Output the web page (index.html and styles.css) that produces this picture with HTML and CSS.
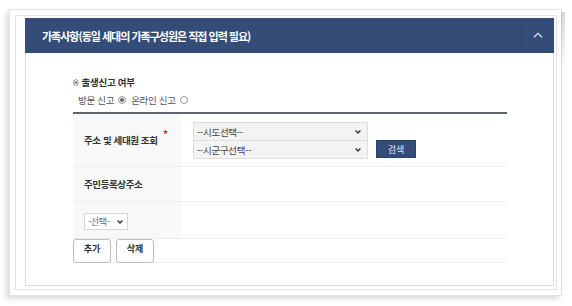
FILE: index.html
```html
<!DOCTYPE html>
<html lang="ko">
<head>
<meta charset="utf-8">
<link rel="stylesheet" href="styles.css">
</head>
<body>
<div class="paper">
  <div class="frame">
    <div class="panel">
      <div class="panel-head">
        <h2 class="title">가족사항(동일 세대의 가족구성원은 직접 입력 필요)</h2>
        <div class="toggle">
          <svg width="10" height="6" viewBox="0 0 10 6"><path d="M1 5.2 L5 1.3 L9 5.2" fill="none" stroke="#dfe5ef" stroke-width="1.3"/></svg>
        </div>
      </div>
      <div class="panel-body">
        <p class="notice"><span class="mark">※</span> 출생신고 여부</p>
        <div class="radios">
          <span>방문 신고</span><span class="radio on"></span>
          <span>온라인 신고</span><span class="radio"></span>
        </div>
        <div class="table">
          <div class="row row-addr">
            <div class="th">주소 및 세대원 조회<span class="req">*</span></div>
            <div class="td addr">
              <div class="selects">
                <div class="select wide"><span>--시도선택--</span><svg class="chev" width="6" height="4" viewBox="0 0 6 4"><path d="M0.6 0.6 L3 3 L5.4 0.6" fill="none" stroke="#333" stroke-width="1.4"/></svg></div>
                <div class="select wide"><span>--시군구선택--</span><svg class="chev" width="6" height="4" viewBox="0 0 6 4"><path d="M0.6 0.6 L3 3 L5.4 0.6" fill="none" stroke="#333" stroke-width="1.4"/></svg></div>
              </div>
              <button class="btn-search">검색</button>
            </div>
          </div>
          <div class="row row-res">
            <div class="th">주민등록상주소</div>
            <div class="td"></div>
          </div>
          <div class="row row-sel">
            <div class="th"><div class="select small"><span>-선택-</span><svg class="chev" width="6" height="4" viewBox="0 0 6 4"><path d="M0.6 0.6 L3 3 L5.4 0.6" fill="none" stroke="#333" stroke-width="1.4"/></svg></div></div>
            <div class="td"></div>
          </div>
          <div class="row row-btns">
            <button class="btn">추가</button>
            <button class="btn">삭제</button>
          </div>
        </div>
      </div>
    </div>
  </div>
</div>
</body>
</html>
```
FILE: styles.css
```css
* { box-sizing: border-box; }
html, body { margin: 0; padding: 0; background: #fff; }
body {
  font-family: "Noto Sans CJK KR", "Noto Sans", sans-serif;
  color: #333;
  width: 572px;
  height: 306px;
  overflow: hidden;
}
.paper {
  position: relative;
  margin: 9px 0 0 9px;
  width: 553px;
  height: 287px;
  border: 1px solid #e2e2e2;
  background: #fff;
  padding: 5px 4px 5px 5px;
  box-shadow: -3px 3px 5px rgba(0,0,0,0.14);
}
.paper::after {
  content: "";
  position: absolute;
  right: -4px;
  top: 2px;
  width: 4px;
  height: 60px;
  background: linear-gradient(to bottom, rgba(0,0,0,0.15), rgba(0,0,0,0));
}
.frame {
  height: 100%;
  border: 1px solid #e2e2e2;
  padding: 2px 2px 3px 9px;
}
.panel {
  height: 100%;
  border: 1px solid #dcdcdc;
  border-top: none;
  display: flex;
  flex-direction: column;
}
.panel-head {
  height: 35px;
  margin: 0 -1px;
  background: #344c78;
  display: flex;
  align-items: center;
  justify-content: space-between;
}
.title {
  margin: 0 0 0 17px;
  color: #fff;
  font-size: 11px;
  font-weight: 700;
  letter-spacing: -1px;
}
.toggle {
  width: 33px;
  height: 22px;
  border-left: 1px solid #2e4470;
  display: flex;
  align-items: center;
  justify-content: center;
  padding-bottom: 1px;
}
.panel-body {
  padding: 23px 0 0 47px;
  width: 481px;
}
.notice {
  margin: 0;
  font-size: 9.5px;
  font-weight: 700;
  color: #333;
  letter-spacing: -0.3px;
  line-height: 13px;
  margin-left: -1px;
}
.mark {
  font-family: "DejaVu Sans", sans-serif;
  font-weight: 400;
  color: #666;
  font-size: 9px;
}
.radios {
  margin: 3px 0 0 5px;
  font-size: 9.5px;
  color: #555;
  line-height: 14px;
  display: flex;
  align-items: center;
  letter-spacing: -0.3px;
}
.radio {
  width: 8px;
  height: 8px;
  border: 1px solid #999;
  border-radius: 50%;
  margin: 0 5px 0 4px;
  background: #fff;
  position: relative;
}
.radio.on::after {
  content: "";
  position: absolute;
  left: 1px;
  top: 1px;
  width: 4px;
  height: 4px;
  border-radius: 50%;
  background: #666;
}
.table {
  margin-top: 5px;
  border-top: 2px solid #5d6670;
  width: 434px;
}
.row {
  display: flex;
  border-bottom: 1px solid #ededed;
}
.th {
  width: 108px;
  background: #f8f8f8;
  padding-left: 11px;
  font-size: 9.5px;
  font-weight: 700;
  color: #333;
  letter-spacing: -0.4px;
  display: flex;
  align-items: center;
  position: relative;
}
.td { flex: 1; }
.req {
  position: absolute;
  left: 90px;
  top: 15px;
  color: #d22;
  font-size: 10px;
  line-height: 10px;
}
.row-addr { height: 53px; }
.addr {
  display: flex;
  align-items: flex-end;
  padding: 7px 0 7px 12px;
  gap: 8px;
}
.selects { display: flex; flex-direction: column; }
.select {
  display: flex;
  align-items: center;
  justify-content: space-between;
  background: #f3f3f3;
  border: 1px solid #dedede;
  font-size: 9.5px;
  color: #444;
  letter-spacing: -0.3px;
  padding: 0 6px 0 3px;
}
.select.wide { width: 175px; height: 19px; }
.select.wide + .select.wide { margin-top: -1px; }
.btn-search {
  width: 40px;
  height: 18px;
  margin-bottom: 1px;
  background: #344c78;
  color: #e6eaf2;
  border: 1px solid #2b416a;
  font-family: inherit;
  font-size: 9px;
  padding: 0;
}
.row-res { height: 35px; }
.row-res .th { padding-bottom: 1px; }
.row-sel { height: 37px; }
.row-sel .th { padding-top: 3px; }
.select.small {
  width: 44px;
  height: 17px;
  background: #fff;
  color: #666;
  padding: 0 4px 0 3px;
  font-weight: 400;
  font-size: 9px;
  border-color: #d6d6d6;
}
.row-btns {
  height: 24px;
  gap: 5px;
  border-bottom: 1px solid #ededed;
}
.btn {
  width: 38px;
  height: 24px;
  background: #fff;
  border: 1px solid #bdbdbd;
  border-radius: 3px;
  font-family: inherit;
  font-size: 9px;
  font-weight: 700;
  color: #333;
  padding: 0 0 5px;
  margin-bottom: -1px;
}
```
